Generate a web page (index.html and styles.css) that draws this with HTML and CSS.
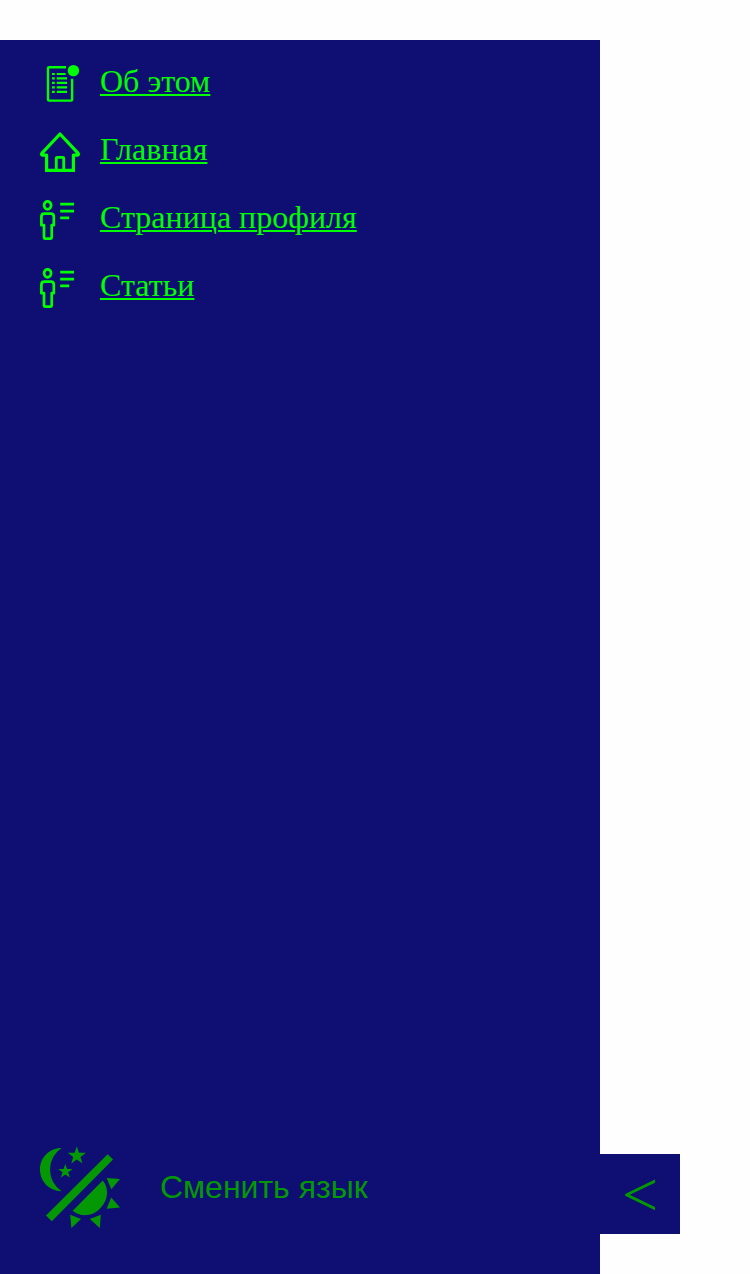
FILE: index.html
```html
<!DOCTYPE html>
<html lang="ru">
<head>
<meta charset="utf-8">
<title>Меню</title>
<link rel="stylesheet" href="styles.css">
</head>
<body>
<svg class="defs" width="0" height="0">
  <symbol id="profile" viewBox="0 0 40 40">
    <g fill="none" stroke="currentColor" stroke-width="2.7">
      <ellipse cx="7.6" cy="5.3" rx="3.5" ry="4"/>
      <path d="M4.4 13.7H10.8Q13.8 13.7 13.8 16.8V25.2H11.7V37.2Q11.7 38.7 10.2 38.7H5.5Q4 38.7 4 37.2V25.2H1.4V16.8Q1.4 13.7 4.4 13.7Z" stroke-linejoin="round"/>
      <path d="M20.2 4.2H34M20.2 11.1H34M20.2 17.8H29.2" stroke-width="2.7"/>
    </g>
  </symbol>
</svg>
<aside class="sidebar">
  <nav class="menu">
    <a class="item" href="#">
      <svg class="icon" viewBox="0 0 40 40">
        <path d="M26 3.3H9Q8 3.3 8 4.3V35.6Q8 36.6 9 36.6H31.1Q32.1 36.6 32.1 35.6V14.7" fill="none" stroke="currentColor" stroke-width="2.4"/>
        <circle cx="33.4" cy="6.6" r="5.7" fill="currentColor"/>
        <path d="M12 10H14.8M16.8 10H25.6M12 14.4H14.8M16.8 14.4H27M12 18.9H14.8M16.8 18.9H27M12 23.4H14.8M16.8 23.4H27M12 27.9H14.8M16.8 27.9H27" stroke="currentColor" stroke-width="2.2"/>
      </svg>
      <span class="label">Об этом</span>
    </a>
    <a class="item" href="#">
      <svg class="icon" viewBox="0 0 40 40">
        <path d="M6.6 38.3V23.2H2.2Q1.2 22.2 2 21.2L20 2L38 21.2Q38.8 22.2 37.8 23.2H33.4V38.3Z" fill="none" stroke="currentColor" stroke-width="3.2" stroke-linejoin="round"/>
        <path d="M5 37H35V40H5Z" fill="currentColor"/>
        <path d="M16.3 38V26.2Q16.3 25.4 17.1 25.4H22.9Q23.7 25.4 23.7 26.2V38" fill="none" stroke="currentColor" stroke-width="2.8"/>
      </svg>
      <span class="label">Главная</span>
    </a>
    <a class="item" href="#">
      <svg class="icon"><use href="#profile"/></svg>
      <span class="label">Страница профиля</span>
    </a>
    <a class="item" href="#">
      <svg class="icon"><use href="#profile"/></svg>
      <span class="label">Статьи</span>
    </a>
  </nav>
  <div class="switchers">
    <button class="plain" type="button" aria-label="Тема">
      <svg class="theme" viewBox="0 0 80 82" fill="currentColor">
        <path d="M21.5 2.1C9 2.1 0 12 0 23.6S9 45.2 21.5 45.2Q10 37 10 23.6Q10 10.2 21.5 2.1Z"/>
        <path d="M36.8 .3L39 6.7H46L40.5 10.9L42.4 17.5L36.8 13.6L31.3 17.5L33.2 10.9L27.8 6.7H34.7Z"/>
        <path d="M25.3 18L27.1 23.1H32.4L28.2 26.3L29.8 31.6L25.3 28.5L20.9 31.6L22.5 26.3L18.2 23.1H23.6Z"/>
        <path d="M67.7 8.2L73 13.5L11.8 75.2L6 69.5Z"/>
        <path d="M62.8 34.6C69 42 68.6 54 60.5 62C52.5 71 40 71 32.7 64.7Z"/>
        <path d="M66.7 32L80 33L71.3 43.3ZM71.2 51.5L80 61.5L66.7 62.8ZM30.2 68.7L41 73L31.4 82ZM60.8 68.7L59.8 82L49.8 73Z"/>
      </svg>
    </button>
    <button class="plain lang" type="button">Сменить язык</button>
  </div>
  <button class="toggle" type="button">&lt;</button>
</aside>
</body>
</html>
```
FILE: styles.css
```css
body {
  margin: 0;
  padding-top: 40px;
  background: #fefefe;
}

.defs {
  position: absolute;
}

.sidebar {
  position: relative;
  box-sizing: border-box;
  width: 600px;
  height: 1234px;
  padding: 24px 40px 46px;
  display: flex;
  flex-direction: column;
  justify-content: space-between;
  background: #0e0e73;
  font: 32px/34px "Liberation Serif", serif;
}

.menu {
  display: flex;
  flex-direction: column;
  gap: 28px;
}

.item {
  display: flex;
  gap: 20px;
  height: 40px;
  color: #0f0;
  text-decoration-thickness: 2px;
  text-underline-offset: 2px;
}

.icon {
  width: 40px;
  height: 40px;
}

.switchers {
  display: flex;
  align-items: center;
  gap: 40px;
}

.plain,
.toggle {
  padding: 0;
  border: 0;
  background: none;
  color: #049904;
}

.theme {
  display: block;
  width: 80px;
  height: 82px;
}

.lang {
  font: 32px/36px "Liberation Sans", sans-serif;
}

.toggle {
  position: absolute;
  right: -80px;
  bottom: 40px;
  box-sizing: border-box;
  width: 80px;
  height: 80px;
  padding-top: 2px;
  background: #0e0e73;
  font: 64px/78px "Liberation Serif", serif;
}
```
